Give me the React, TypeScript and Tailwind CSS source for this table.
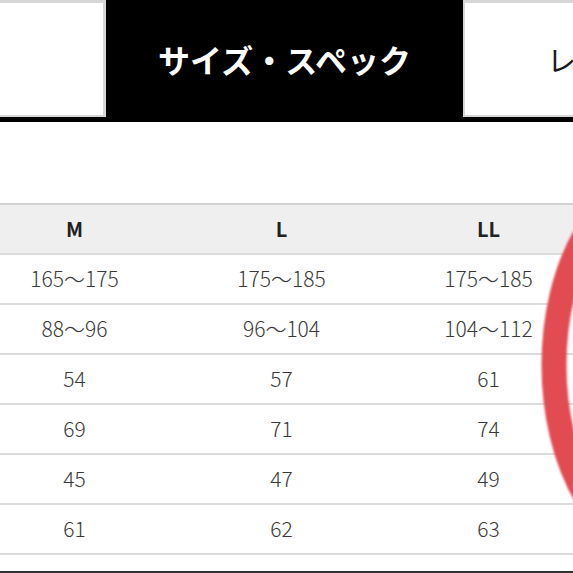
const sizes = ["M", "L", "LL", ""];

const rows: string[][] = [
  ["165～175", "175～185", "175～185", ""],
  ["88～96", "96～104", "104～112", ""],
  ["54", "57", "61", ""],
  ["69", "71", "74", ""],
  ["45", "47", "49", ""],
  ["61", "62", "63", ""],
];

export default function App() {
  return (
    <div className="relative w-[573px] h-[573px] overflow-hidden bg-white font-['Noto_Sans_CJK_JP','Noto_Sans',sans-serif]">
      {/* tabs */}
      <div className="flex h-[122px] border-b-[5px] border-black">
        <div className="w-[106px] bg-white border-t-[3px] border-r-[3px] border-b-2 border-[#d6d6d6]" />
        <div className="w-[357px] bg-black flex items-center justify-center">
          <span className="text-white font-bold text-[32px] leading-none">
            サイズ・スペック
          </span>
        </div>
        <div className="flex-1 bg-white border-t-[3px] border-l-2 border-b-2 border-[#d6d6d6] flex items-center pl-[82px] overflow-hidden whitespace-nowrap">
          <span className="text-[#1a1a1a] text-[29px] leading-none">レ</span>
        </div>
      </div>

      <div className="h-[81px]" />

      {/* size table */}
      <div className="-ml-[29px] w-[828px] border-t-2 border-[#d2d2d2]">
        <div className="grid grid-cols-4 h-[50px] bg-[#efefef] border-b-2 border-[#dcdcdc]">
          {sizes.map((s, i) => (
            <div key={i} className="flex items-center justify-center text-[20px] font-semibold text-[#222]">
              {s}
            </div>
          ))}
        </div>
        {rows.map((r, i) => (
          <div key={i} className="grid grid-cols-4 h-[50px] border-b-2 border-[#dcdcdc]">
            {r.map((v, j) => (
              <div key={j} className="flex items-center justify-center text-[21px] font-light text-[#3a3a3a]">
                {v}
              </div>
            ))}
          </div>
        ))}
      </div>

      <div className="h-[16px]" />
      <div className="h-[2px] bg-[#333]" />

      {/* red marker circle */}
      <svg className="absolute inset-0 pointer-events-none" width="573" height="573" viewBox="0 0 573 573">
        <defs>
          <filter id="soft">
            <feGaussianBlur stdDeviation="0.8" />
          </filter>
        </defs>
        <ellipse cx="666" cy="365" rx="112" ry="187" fill="none" stroke="#e34c52" strokeWidth="25" filter="url(#soft)" />
      </svg>
    </div>
  );
}
